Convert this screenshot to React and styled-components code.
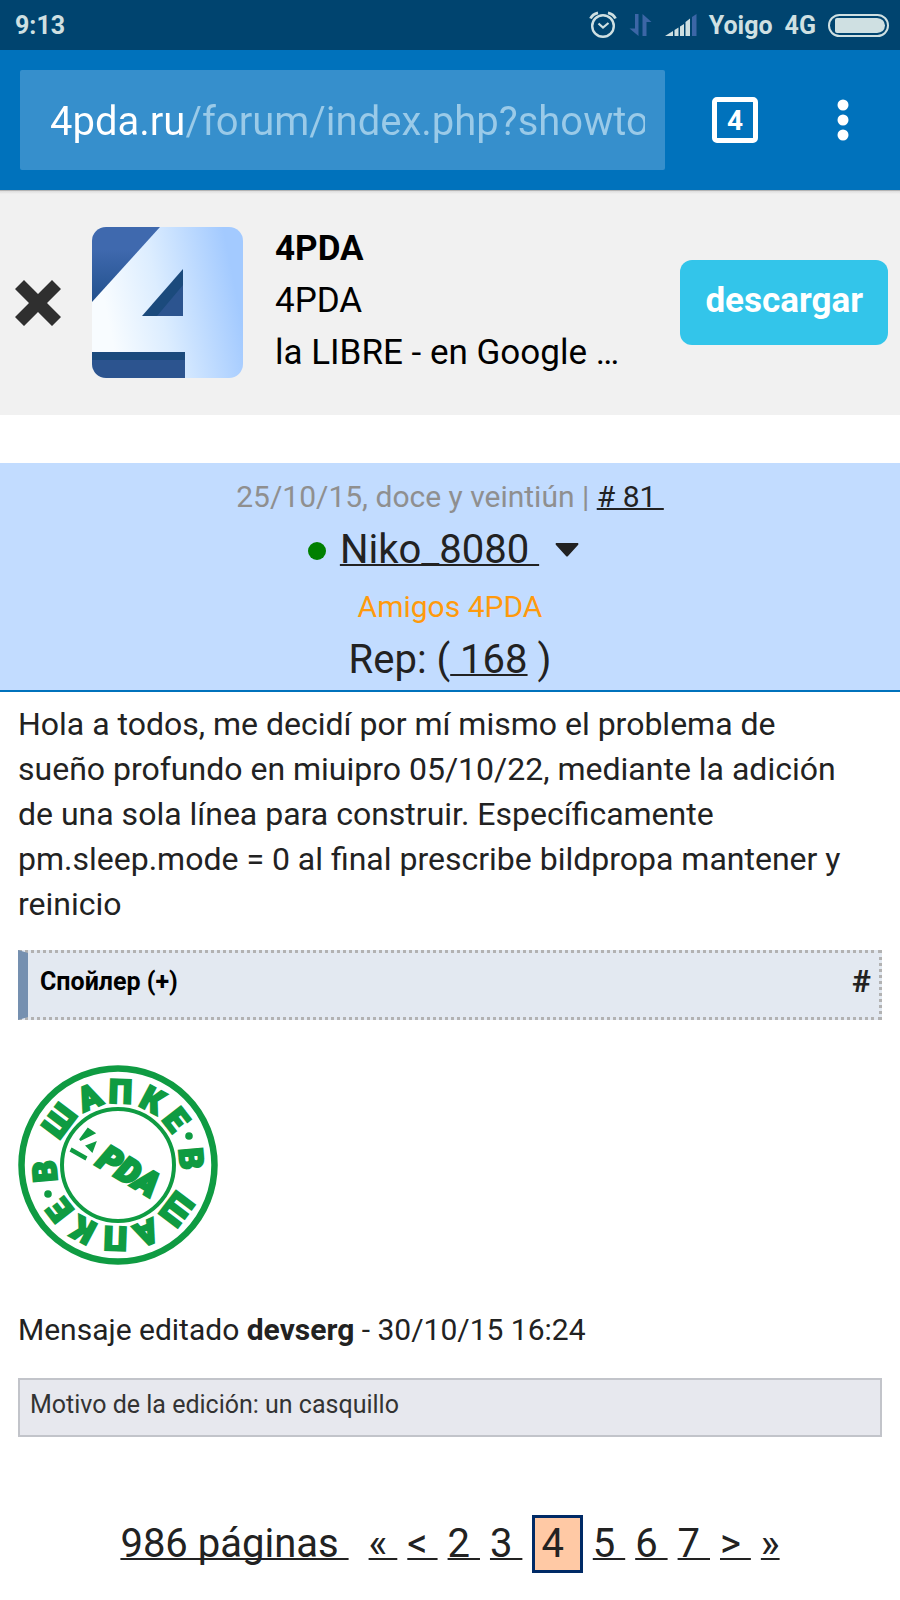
import React, { useState } from 'react'
import styled, { createGlobalStyle } from 'styled-components'

const pages = ['2', '3', '4', '5', '6', '7']

const stampLetters = [
  ['Ш', 307], ['А', 337], ['П', 2], ['К', 28], ['Е', 52], ['В', 85],
  ['Ш', 127], ['А', 157], ['П', 182], ['К', 208], ['Е', 232], ['В', 265],
]

function AlarmIcon() {
  return (
    <svg width="28" height="28" viewBox="0 0 28 28" fill="none" stroke="#cfe0e2">
      <circle cx="14" cy="15" r="10.8" strokeWidth="2.4" />
      <path d="M9.5 12.5l4.5 4 5.5-4.5" strokeWidth="2.2" />
      <path d="M1.5 7.5Q3.5 3 9 1.8M26.5 7.5Q24.5 3 19 1.8" strokeWidth="2.8" />
    </svg>
  )
}

function TransferIcon() {
  return (
    <svg width="24" height="24" viewBox="0 0 24 24" fill="#3c66a6">
      <path d="M9.5 1v22L0.5 15.5H6V1z" />
      <path d="M13.5 23V1L22.5 9H17.5V23z" />
    </svg>
  )
}

function SignalIcon() {
  return (
    <svg width="32" height="22" viewBox="0 0 32 22" fill="#cfe0e2">
      <path d="M0 22L8 17V22zM9.5 16L13.5 13.5V22H9.5zM15 12.5L19 10V22H15zM20.5 8L25 4.5V22H20.5z" />
      <path d="M27 3L31.5 0V22H27z" fill="#3c66a6" />
    </svg>
  )
}

function BatteryIcon() {
  return (
    <svg width="61" height="23" viewBox="0 0 61 23">
      <rect x="1" y="1" width="59" height="21" rx="10.5" fill="none" stroke="#cfe0e2" strokeWidth="2" />
      <path d="M9 4H49Q56.5 4.5 57 11.5Q56.5 18.5 49 19H9Q7 19 7 17V6Q7 4 9 4z" fill="#cfe0e2" />
    </svg>
  )
}

function AppLogo() {
  return (
    <svg width="151" height="151" viewBox="0 0 151 151" role="img" aria-label="4PDA">
      <defs>
        <linearGradient id="sheet" x1="0" y1="0.6" x2="1" y2="0.4">
          <stop offset="0.1" stopColor="#f8fcff" />
          <stop offset="0.45" stopColor="#dcedff" />
          <stop offset="0.95" stopColor="#a3caff" />
        </linearGradient>
        <linearGradient id="corner" x1="0" y1="0" x2="0" y2="1">
          <stop offset="0.3" stopColor="#3f69ae" />
          <stop offset="1" stopColor="#22508c" />
        </linearGradient>
        <clipPath id="rounded">
          <rect width="151" height="151" rx="14" />
        </clipPath>
      </defs>
      <g clipPath="url(#rounded)">
        <rect width="151" height="151" fill="url(#sheet)" />
        <path d="M0 0H68L0 75z" fill="url(#corner)" />
        <path d="M91 42V89H50z" fill="#1b4a7c" />
        <path d="M91 58V89H65z" fill="#2c548f" />
        <rect y="125" width="93" height="26" fill="#2c548f" />
        <rect y="125" width="93" height="8" fill="#1b4a7c" />
      </g>
    </svg>
  )
}

function Stamp() {
  return (
    <StStamp viewBox="0 0 200 200" role="img" aria-label="В шапке 4PDA">
      <circle cx="100" cy="100" r="96.5" fill="none" stroke="#0f9b42" strokeWidth="6.5" />
      <circle cx="100" cy="100" r="56" fill="none" stroke="#0f9b42" strokeWidth="4" />
      <g stroke="#0f9b42" strokeWidth="2.2">
        {stampLetters.map(([letter, angle]) => (
          <text
            key={angle}
            x="100"
            y="38"
            fontSize="33"
            transform={`rotate(${angle} 100 100)`}
          >
            {letter}
          </text>
        ))}
        <text
          y="12"
          fontSize="34"
          fontStyle="italic"
          strokeWidth="3"
          transform="translate(111 106) rotate(31)"
        >
          PDA
        </text>
        <path d="M62 75L70 64L76 68zM69 81L77 78L74 86zM54 84L68 92L67 94L53 86z" />
      </g>
      <circle cx="171" cy="71" r="3.8" />
      <circle cx="30" cy="129" r="3.8" />
    </StStamp>
  )
}

function App() {
  const [url, setUrl] = useState('4pda.ru/forum/index.php?showto')

  return (
    <StPage>
      <GlobalStyle />
      <StStatusBar>
        <span>9:13</span>
        <StStatusIcons>
          <AlarmIcon />
          <TransferIcon />
          <SignalIcon />
          <span>Yoigo</span>
          <span>4G</span>
          <BatteryIcon />
        </StStatusIcons>
      </StStatusBar>

      <StToolbar>
        <StAddress>
          <StUrl
            aria-label="URL"
            value={url}
            spellCheck={false}
            onChange={(e) => setUrl(e.target.value)}
          />
        </StAddress>
        <StTabs>4</StTabs>
        <StMenu aria-label="Menu">
          <svg width="12" height="42" viewBox="0 0 12 42" fill="#fff">
            <circle cx="6" cy="6" r="5.5" />
            <circle cx="6" cy="21" r="5.5" />
            <circle cx="6" cy="36" r="5.5" />
          </svg>
        </StMenu>
      </StToolbar>

      <StBanner>
        <StClose aria-label="Cerrar">
          <svg width="48" height="48" viewBox="0 0 48 48" fill="#2f2f2f">
            <path d="M10 1L24 15L38 1L47 10L33 24L47 38L38 47L24 33L10 47L1 38L15 24L1 10z" />
          </svg>
        </StClose>
        <AppLogo />
        <StBannerText>
          <strong>4PDA</strong>
          <span>4PDA</span>
          <span>la LIBRE - en Google …</span>
        </StBannerText>
        <StDownload href="#download">descargar</StDownload>
      </StBanner>

      <StPostHeader>
        <StMeta color="#8f8f8f" height={46}>
          25/10/15, doce y veintiún | <StLink href="#81">{'# 81 '}</StLink>
        </StMeta>
        <StUser>
          <StOnline />
          <StLink href="#user">{'Niko_8080 '}</StLink>
          <StUserMenu aria-label="Niko_8080">
            <svg width="24" height="14" viewBox="0 0 24 14" fill="#222">
              <path d="M1 0H23Q24 1 23 2L13 13Q12 14 11 13L1 2Q0 1 1 0z" />
            </svg>
          </StUserMenu>
        </StUser>
        <StMeta color="#ff9a0c" height={54}>Amigos 4PDA</StMeta>
        <StRep>
          Rep: (<StLink href="#rep">{' 168'}</StLink> )
        </StRep>
      </StPostHeader>

      <StPost>
        <StMessage>
          Hola a todos, me decidí por mí mismo el problema de sueño profundo en
          miuipro 05/10/22, mediante la adición de una sola línea para construir.
          Específicamente pm.sleep.mode = 0 al final prescribe bildpropa mantener
          y reinicio
        </StMessage>
        <StSpoiler>
          <StSpoilerToggle>Спойлер (+)</StSpoilerToggle>
          <StSpoilerLink href="#spoiler">#</StSpoilerLink>
        </StSpoiler>
        <Stamp />
        <StEdited>
          Mensaje editado <b>devserg</b> - 30/10/15 16:24
        </StEdited>
        <StReason>Motivo de la edición: un casquillo</StReason>
      </StPost>

      <StPagination>
        <StPageCount href="#pages">{'986 páginas '}</StPageCount>
        <StLink href="#first">{'« '}</StLink>
        <StLink href="#prev">{'< '}</StLink>
        {pages.map((page) =>
          page === '4' ? (
            <StCurrent key={page}>{'4 '}</StCurrent>
          ) : (
            <StLink key={page} href={`#page${page}`}>{`${page} `}</StLink>
          )
        )}
        <StLink href="#next">{'> '}</StLink>
        <StLink href="#last">»</StLink>
      </StPagination>
    </StPage>
  )
}

export default App

const GlobalStyle = createGlobalStyle`
  * {
    box-sizing: border-box;
  }

  body {
    margin: 0;
    background-color: #fff;
    color: #222;
    font-family: Roboto, "Noto Sans", sans-serif;
  }

  button {
    border: 0;
    padding: 0;
    background: none;
    color: inherit;
    font-family: inherit;
    cursor: pointer;
  }

  svg {
    display: block;
    flex: none;
  }
`

const StPage = styled.div`
  width: 100%;
`

const StStatusBar = styled.div`
  height: 50px;
  padding: 0 11px 0 15px;
  display: flex;
  justify-content: space-between;
  align-items: center;
  background-color: #00446f;
  color: #cfe0e2;
  font-size: 25px;
  font-weight: 700;
`

const StStatusIcons = styled.div`
  display: flex;
  align-items: center;
  gap: 12px;
`

const StToolbar = styled.div`
  height: 140px;
  padding: 20px 51px 20px 20px;
  display: flex;
  align-items: center;
  background-color: #0072bc;
`

const StAddress = styled.div`
  flex: 1;
  height: 100px;
  padding: 2px 20px 0 30px;
  display: flex;
  align-items: center;
  border-radius: 2px;
  background-color: #368fcc;
`

const StUrl = styled.input`
  width: 100%;
  height: 60px;
  border: 0;
  outline: 0;
  padding: 0;
  font-family: inherit;
  font-size: 40px;
  color: transparent;
  background-image: linear-gradient(to right, #fff 134px, #9acae8 134px);
  background-clip: text;
  -webkit-background-clip: text;
`

const StTabs = styled.button`
  width: 46px;
  height: 46px;
  margin: 0 79px 0 47px;
  && {
    border: 5px solid #fff;
  }
  border-radius: 5px;
  color: #fff;
  font-size: 28px;
  font-weight: 700;
`

const StMenu = styled.button`
  width: 12px;
`

const StBanner = styled.div`
  height: 225px;
  padding: 0 12px 0 14px;
  display: flex;
  align-items: center;
  background: linear-gradient(#b4b4b4 1px, #dcdcdc 1px, #f1f1f1 4px);
  color: #000;
`

const StClose = styled.button`
  margin-right: 30px;
`

const StBannerText = styled.div`
  flex: 1;
  margin-left: 32px;
  padding-bottom: 4px;
  display: flex;
  flex-direction: column;
  font-size: 35px;
  line-height: 52px;
`

const StDownload = styled.a`
  height: 85px;
  padding: 0 25px;
  border-radius: 12px;
  background-color: #33c5ea;
  color: #fff;
  font-size: 35px;
  font-weight: 700;
  line-height: 82px;
  text-decoration: none;
`

const StPostHeader = styled.div`
  margin-top: 48px;
  padding: 11px 0 4px;
  border-bottom: 2px solid #0072bc;
  background-color: #c2dcff;
  text-align: center;
`

const StMeta = styled.div`
  color: ${({ color }) => color};
  font-size: 30px;
  line-height: ${({ height }) => height}px;
`

const StLink = styled.a`
  color: #222;
  white-space: pre;
  text-decoration: underline;
  text-decoration-thickness: 2px;
  text-decoration-skip-ink: none;
`

const StUser = styled.div`
  padding-right: 13px;
  display: flex;
  justify-content: center;
  align-items: center;
  font-size: 40px;
  line-height: 60px;
`

const StOnline = styled.span`
  width: 18px;
  height: 18px;
  margin: 2px 14px 0 0;
  border-radius: 50%;
  background-color: #008000;
`

const StUserMenu = styled.button`
  margin-left: 16px;
`

const StRep = styled.div`
  font-size: 40px;
  line-height: 52px;
`

const StPost = styled.div`
  padding: 10px 18px 0;
`

const StMessage = styled.p`
  margin: 0;
  padding-right: 24px;
  font-size: 32px;
  line-height: 45px;
`

const StSpoiler = styled.div`
  height: 70px;
  margin: 23px 0 45px;
  padding: 0 8px 8px 12px;
  display: flex;
  justify-content: space-between;
  align-items: center;
  border: 3px dotted #b2b2b2;
  border-left: 10px solid #7590b0;
  background-color: #e3e9f1;
`

const StSpoilerToggle = styled.button`
  && {
    color: #000;
  }
  font-size: 25px;
  font-weight: 700;
`

const StSpoilerLink = styled.a`
  color: #222;
  font-size: 32px;
  font-weight: 700;
  text-decoration: none;
`

const StStamp = styled.svg`
  width: 200px;
  height: 200px;
  fill: #0f9b42;
  font-family: Roboto, "Liberation Sans", sans-serif;
  font-weight: 900;
  text-anchor: middle;
`

const StEdited = styled.p`
  margin: 42px 0 26px;
  font-size: 30px;
  line-height: 45px;
`

const StReason = styled.div`
  height: 59px;
  padding: 0 10px;
  border: 2px solid #c2c4ca;
  background-color: #e7e8ee;
  color: #333;
  font-size: 25px;
  line-height: 50px;
`

const StPagination = styled.nav`
  padding: 78px 0 28px;
  display: flex;
  justify-content: center;
  align-items: center;
  gap: 10px;
  font-size: 40px;
  line-height: 52px;
`

const StPageCount = styled(StLink)`
  margin-right: 10px;
`

const StCurrent = styled.span`
  padding: 0 6px;
  border: 3px solid #002a66;
  background-color: #ffc9a5;
  white-space: pre;
`
